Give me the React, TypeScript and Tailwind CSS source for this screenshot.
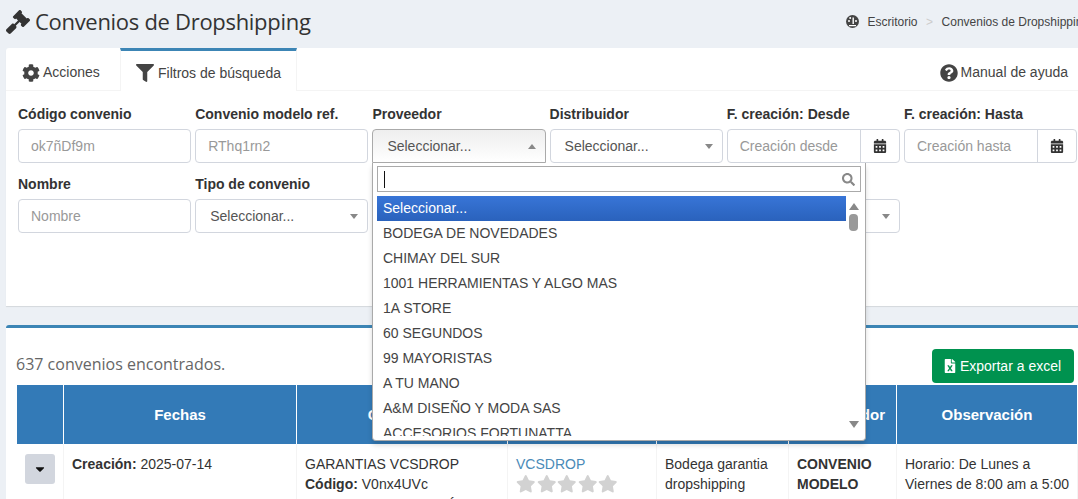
import { FaCalendarAlt, FaCaretDown, FaCog, FaFileExcel, FaFilter, FaGavel, FaQuestionCircle, FaSearch, FaStar } from 'react-icons/fa';

const providers = [
  'BODEGA DE NOVEDADES',
  'CHIMAY DEL SUR',
  '1001 HERRAMIENTAS Y ALGO MAS',
  '1A STORE',
  '60 SEGUNDOS',
  '99 MAYORISTAS',
  'A TU MANO',
  'A&M DISEÑO Y MODA SAS',
  'ACCESORIOS FORTUNATTA',
];

function Label({ children }: { children: string }) {
  return <label className="mb-[5px] block h-5 text-[14px] leading-5 font-bold text-[#333]">{children}</label>;
}

function TextField({ label, placeholder }: { label: string; placeholder: string }) {
  return (
    <div>
      <Label>{label}</Label>
      <div className="flex h-[34px] items-center rounded border border-[#d2d6de] px-3 text-[14px] text-[#999]">{placeholder}</div>
    </div>
  );
}

function SelectField({ label, open }: { label: string; open?: boolean }) {
  return (
    <div>
      <Label>{label}</Label>
      <div
        className={
          open
            ? 'flex h-[34px] items-center justify-between rounded-t border border-[#aaa] bg-gradient-to-b from-[#eee] to-white pr-[9px] pl-[14px] text-[14px] text-[#555]'
            : 'flex h-[34px] items-center justify-between rounded border border-[#d2d6de] pr-[9px] pl-[14px] text-[14px] text-[#555]'
        }
      >
        <span>Seleccionar...</span>
        <span
          className={
            open
              ? 'h-0 w-0 border-x-[4px] border-b-[5px] border-x-transparent border-b-[#888]'
              : 'h-0 w-0 border-x-[4px] border-t-[5px] border-x-transparent border-t-[#888]'
          }
        />
      </div>
    </div>
  );
}

function DateField({ label, placeholder }: { label: string; placeholder: string }) {
  return (
    <div>
      <Label>{label}</Label>
      <div className="flex h-[34px] items-center rounded border border-[#d2d6de] text-[14px] text-[#999]">
        <span className="flex-1 pl-3">{placeholder}</span>
        <span className="flex h-full w-[39px] items-center justify-center border-l border-[#d2d6de] text-[#333]">
          <FaCalendarAlt size={14} />
        </span>
      </div>
    </div>
  );
}

function HeaderCell({ className, children }: { className: string; children?: string }) {
  return <div className={`flex shrink-0 items-center justify-center border-r border-white pt-[1px] text-[15px] font-bold text-white ${className}`}>{children}</div>;
}

function BodyCell({ className, children }: { className: string; children?: React.ReactNode }) {
  return <div className={`shrink-0 border-r border-[#f4f4f4] px-2 pt-[10px] text-[14px] leading-5 text-[#333] ${className}`}>{children}</div>;
}

// gauge glyph used in the breadcrumb
function DashboardIcon() {
  return (
    <svg width="13" height="13" viewBox="0 0 13 13" className="mr-[9px]">
      <circle cx="6.5" cy="6.5" r="6.5" fill="#444" />
      <circle cx="3" cy="6" r="1" fill="#fff" />
      <circle cx="4.2" cy="3" r="1" fill="#fff" />
      <circle cx="10" cy="6" r="1" fill="#fff" />
      <path d="M7.2 2.5 L7.2 9" stroke="#fff" strokeWidth="1.4" />
      <rect x="3" y="10" width="7" height="1.2" fill="#fff" />
    </svg>
  );
}

function ProviderDropdown() {
  return (
    <div className="absolute top-[163px] left-[372px] z-10 flex h-[278px] w-[494px] flex-col overflow-hidden rounded-b border border-t-0 border-[#aaa] bg-white px-1 pt-[3px] pb-[4px] shadow-[0_4px_5px_rgba(0,0,0,0.15)]">
      <div className="flex h-[26px] shrink-0 items-center justify-between border border-[#aaa] bg-white pr-[5px] pl-[6px] text-[#888]">
        <span className="h-[17px] w-px bg-[#111]" />
        <FaSearch size={13} />
      </div>
      <div className="mt-1 flex min-h-0 flex-1">
        <ul className="min-w-0 flex-1 overflow-hidden text-[14px] leading-[25px] text-[#444]">
          <li className="h-[25px] bg-gradient-to-b from-[#3875d7] to-[#2a62bc] px-[6px] text-white">Seleccionar...</li>
          {providers.map((name) => (
            <li key={name} className="h-[25px] px-[6px]">{name}</li>
          ))}
        </ul>
        <div className="flex w-[15px] shrink-0 flex-col items-center pt-[7px]">
          <span className="h-0 w-0 border-x-[5px] border-b-[7px] border-x-transparent border-b-[#888]" />
          <span className="mt-[4px] h-[17px] w-[9px] rounded bg-[#999]" />
          <span className="mt-auto mb-[8px] h-0 w-0 border-x-[5px] border-t-[7px] border-x-transparent border-t-[#888]" />
        </div>
      </div>
    </div>
  );
}

export default function App() {
  return (
    <div className="relative h-[499px] w-[1078px] overflow-hidden bg-[#ecf0f5] font-['Liberation_Sans',sans-serif]">
      {/* Page heading */}
      <div className="flex h-[48px] w-[1101px] items-center justify-between pr-[12px] pb-[5px] pl-[6px]">
        <h1 className="flex items-center gap-[5px] font-['Open_Sans',sans-serif] text-[22px] font-normal tracking-[-0.3px] text-[#333]">
          <FaGavel size={24} />
          <span>Convenios de Dropshipping</span>
        </h1>
        <div className="flex items-center text-[12px] text-[#444]">
          <DashboardIcon />
          <span>Escritorio</span>
          <span className="mx-[8.5px] text-[#ccc]">&gt;</span>
          <span>Convenios de Dropshipping</span>
        </div>
      </div>

      {/* Filters card */}
      <div className="ml-[6px] h-[258px] w-[1090px] rounded-t-[3px] bg-white shadow-[0_1px_1px_rgba(0,0,0,0.1)]">
        <div className="flex h-[43px] items-stretch justify-between border-b border-[#f4f4f4] pr-[28px] text-[14px] text-[#444]">
          <div className="flex">
            <div className="flex w-[114px] items-center gap-[3px] pt-[7px] pl-[16px]">
              <FaCog size={18} />
              <span>Acciones</span>
            </div>
            <div className="-mb-px flex w-[177px] items-center gap-[4px] border-x border-t-[3px] border-x-[#f4f4f4] border-t-[#3c85b5] bg-white pt-[4px] pl-[15px]">
              <FaFilter size={18} />
              <span>Filtros de búsqueda</span>
            </div>
          </div>
          <div className="flex items-center gap-[3px] pt-[7px]">
            <FaQuestionCircle size={18} />
            <span>Manual de ayuda</span>
          </div>
        </div>
        <div className="grid grid-cols-[repeat(6,173.2px)] gap-x-[4px] gap-y-[11px] pt-[13px] pl-[12px]">
          <TextField label="Código convenio" placeholder="ok7ñDf9m" />
          <TextField label="Convenio modelo ref." placeholder="RThq1rn2" />
          <SelectField label="Proveedor" open />
          <SelectField label="Distribuidor" />
          <DateField label="F. creación: Desde" placeholder="Creación desde" />
          <DateField label="F. creación: Hasta" placeholder="Creación hasta" />
          <TextField label="Nombre" placeholder="Nombre" />
          <SelectField label="Tipo de convenio" />
          <SelectField label="Estado" />
          <SelectField label="Bodega" />
          <SelectField label="Categoría" />
        </div>
      </div>

      {/* Results card */}
      <div className="mt-[19px] ml-[6px] w-[1090px] rounded-t-[3px] border-t-[3px] border-[#3c85b5] bg-white pl-[11px]">
        <div className="flex h-[57px] items-end justify-between pr-[22px] pb-[2px]">
          <span className="-ml-px mb-[7px] font-['Open_Sans',sans-serif] text-[16px] text-[#666]">637 convenios encontrados.</span>
          <button className="flex h-[34px] w-[142px] items-center justify-center gap-[3px] rounded bg-[#00924f] pr-[2px] text-[14px] text-white">
            <FaFileExcel size={14} />
            Exportar a excel
          </button>
        </div>
        <div className="flex h-[59px] bg-[#337ab7]">
          <HeaderCell className="w-[47px]" />
          <HeaderCell className="w-[233px]">Fechas</HeaderCell>
          <HeaderCell className="w-[211px]">Convenio</HeaderCell>
          <HeaderCell className="w-[149px]">Proveedor</HeaderCell>
          <HeaderCell className="w-[132px]">Bodega</HeaderCell>
          <HeaderCell className="w-[108px] !justify-end pr-[11px]">Distribuidor</HeaderCell>
          <HeaderCell className="w-[181px]">Observación</HeaderCell>
        </div>
        <div className="flex h-[80px]">
          <BodyCell className="w-[47px] !px-0 !pt-[10px]">
            <span className="ml-2 flex h-[30px] w-[30px] items-center justify-center rounded-[3px] bg-[#d2d6de] text-[#111]">
              <FaCaretDown size={14} />
            </span>
          </BodyCell>
          <BodyCell className="w-[233px]"><b>Creación:</b> 2025-07-14</BodyCell>
          <BodyCell className="w-[211px]">
            GARANTIAS VCSDROP
            <br />
            <b>Código:</b> V0nx4UVc
            <span className="mt-[1px] block">BODEGA DE GARANTÍA</span>
          </BodyCell>
          <BodyCell className="w-[149px]">
            <span className="text-[#4a8bb8]">VCSDROP</span>
            <span className="flex gap-[1px] text-[#d2d2d2]">
              <FaStar size={19.5} />
              <FaStar size={19.5} />
              <FaStar size={19.5} />
              <FaStar size={19.5} />
              <FaStar size={19.5} />
            </span>
          </BodyCell>
          <BodyCell className="w-[132px]">Bodega garantia dropshipping</BodyCell>
          <BodyCell className="w-[108px] font-bold">CONVENIO MODELO</BodyCell>
          <BodyCell className="w-[181px]">Horario: De Lunes a Viernes de 8:00 am a 5:00 pm</BodyCell>
        </div>
      </div>

      <ProviderDropdown />
    </div>
  );
}
